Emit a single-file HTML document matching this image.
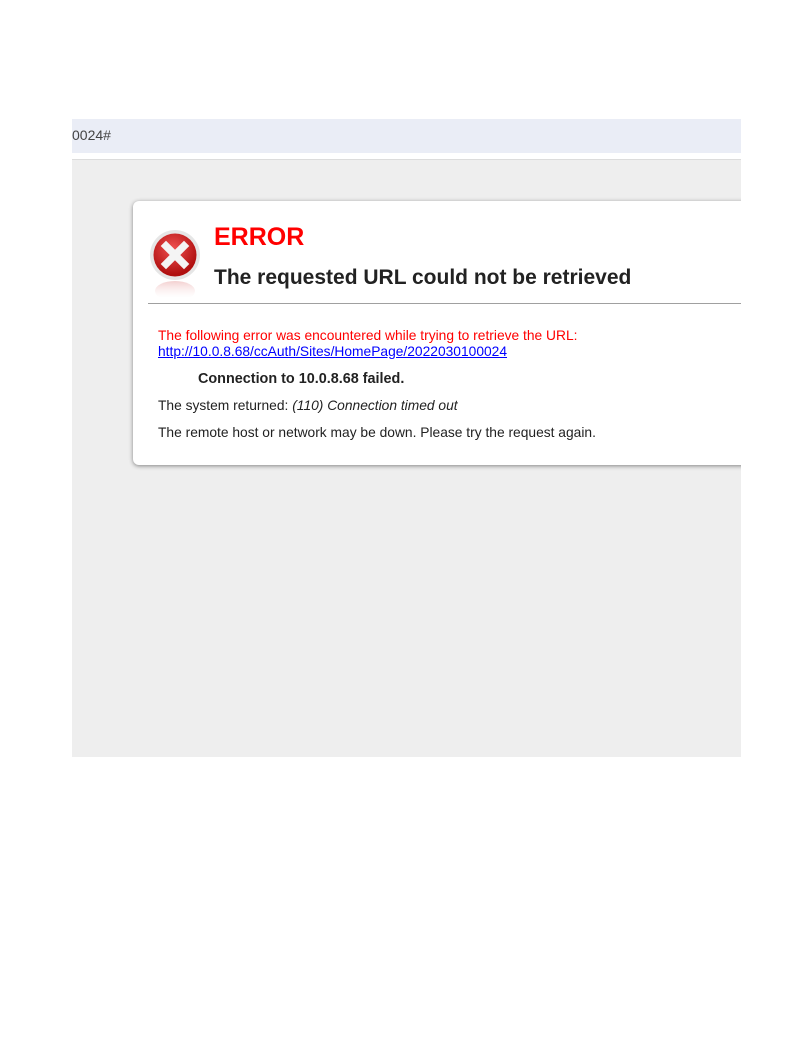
<!DOCTYPE html>
<html><head><meta charset="utf-8"><style>
html,body{margin:0;padding:0;background:#fff;width:812px;height:1054px;overflow:hidden;font-family:"Liberation Sans",sans-serif;}
.bar{position:absolute;left:72px;top:119px;width:669px;height:34px;background:#eaedf6;}
.bar span{position:absolute;left:0;top:8px;font-size:14px;color:#444;}
.gray{position:absolute;left:72px;top:159px;width:669px;height:597px;background:#eeeeee;border-top:1px solid #dcdcdc;overflow:hidden;}
.card{position:absolute;left:61px;top:41px;width:700px;height:264px;background:#fff;border-radius:6px;box-shadow:0 1px 4px rgba(0,0,0,.45);}
.t{position:absolute;white-space:nowrap;}
</style></head><body>
<div class="bar"><span>0024#</span></div>
<div class="gray">
 <div class="card">
  <svg class="t" style="left:16px;top:28px" width="52" height="68" viewBox="0 0 52 68">
   <defs>
    <radialGradient id="g" cx="45%" cy="35%" r="60%"><stop offset="0" stop-color="#f05050"/><stop offset="1" stop-color="#b01010"/></radialGradient>
    <linearGradient id="r" x1="0" y1="0" x2="0" y2="1"><stop offset="0" stop-color="#e8a0a0" stop-opacity=".5"/><stop offset="1" stop-color="#fff" stop-opacity="0"/></linearGradient>
   </defs>
   <circle cx="26" cy="26" r="25" fill="#e6e6e6"/>
   <circle cx="26" cy="26" r="21.5" fill="url(#g)"/>
   <path d="M17 17 L35 35 M35 17 L17 35" stroke="#f4f4f4" stroke-width="7.5" stroke-linecap="square"/>
   <ellipse cx="26" cy="62" rx="20" ry="10" fill="url(#r)"/>
  </svg>
  <div class="t" style="left:81px;top:22px;font-size:25px;font-weight:bold;color:#f00;">ERROR</div>
  <div class="t" style="left:81px;top:65px;font-size:21px;font-weight:bold;color:#222;">The requested URL could not be retrieved</div>
  <div class="t" style="left:15px;top:102px;width:700px;border-top:1px solid #a0a0a0;"></div>
  <div class="t" style="left:25px;top:127px;font-size:13.8px;color:#f00;">The following error was encountered while trying to retrieve the URL:</div>
  <div class="t" style="left:25px;top:143px;font-size:13.8px;color:#00f;text-decoration:underline;">http://10.0.8.68/ccAuth/Sites/HomePage/2022030100024</div>
  <div class="t" style="left:65px;top:170px;font-size:14.4px;font-weight:bold;color:#222;">Connection to 10.0.8.68 failed.</div>
  <div class="t" style="left:25px;top:197px;font-size:13.8px;color:#222;">The system returned: <i>(110) Connection timed out</i></div>
  <div class="t" style="left:25px;top:224px;font-size:13.8px;color:#222;">The remote host or network may be down. Please try the request again.</div>
 </div>
</div>
</body></html>
